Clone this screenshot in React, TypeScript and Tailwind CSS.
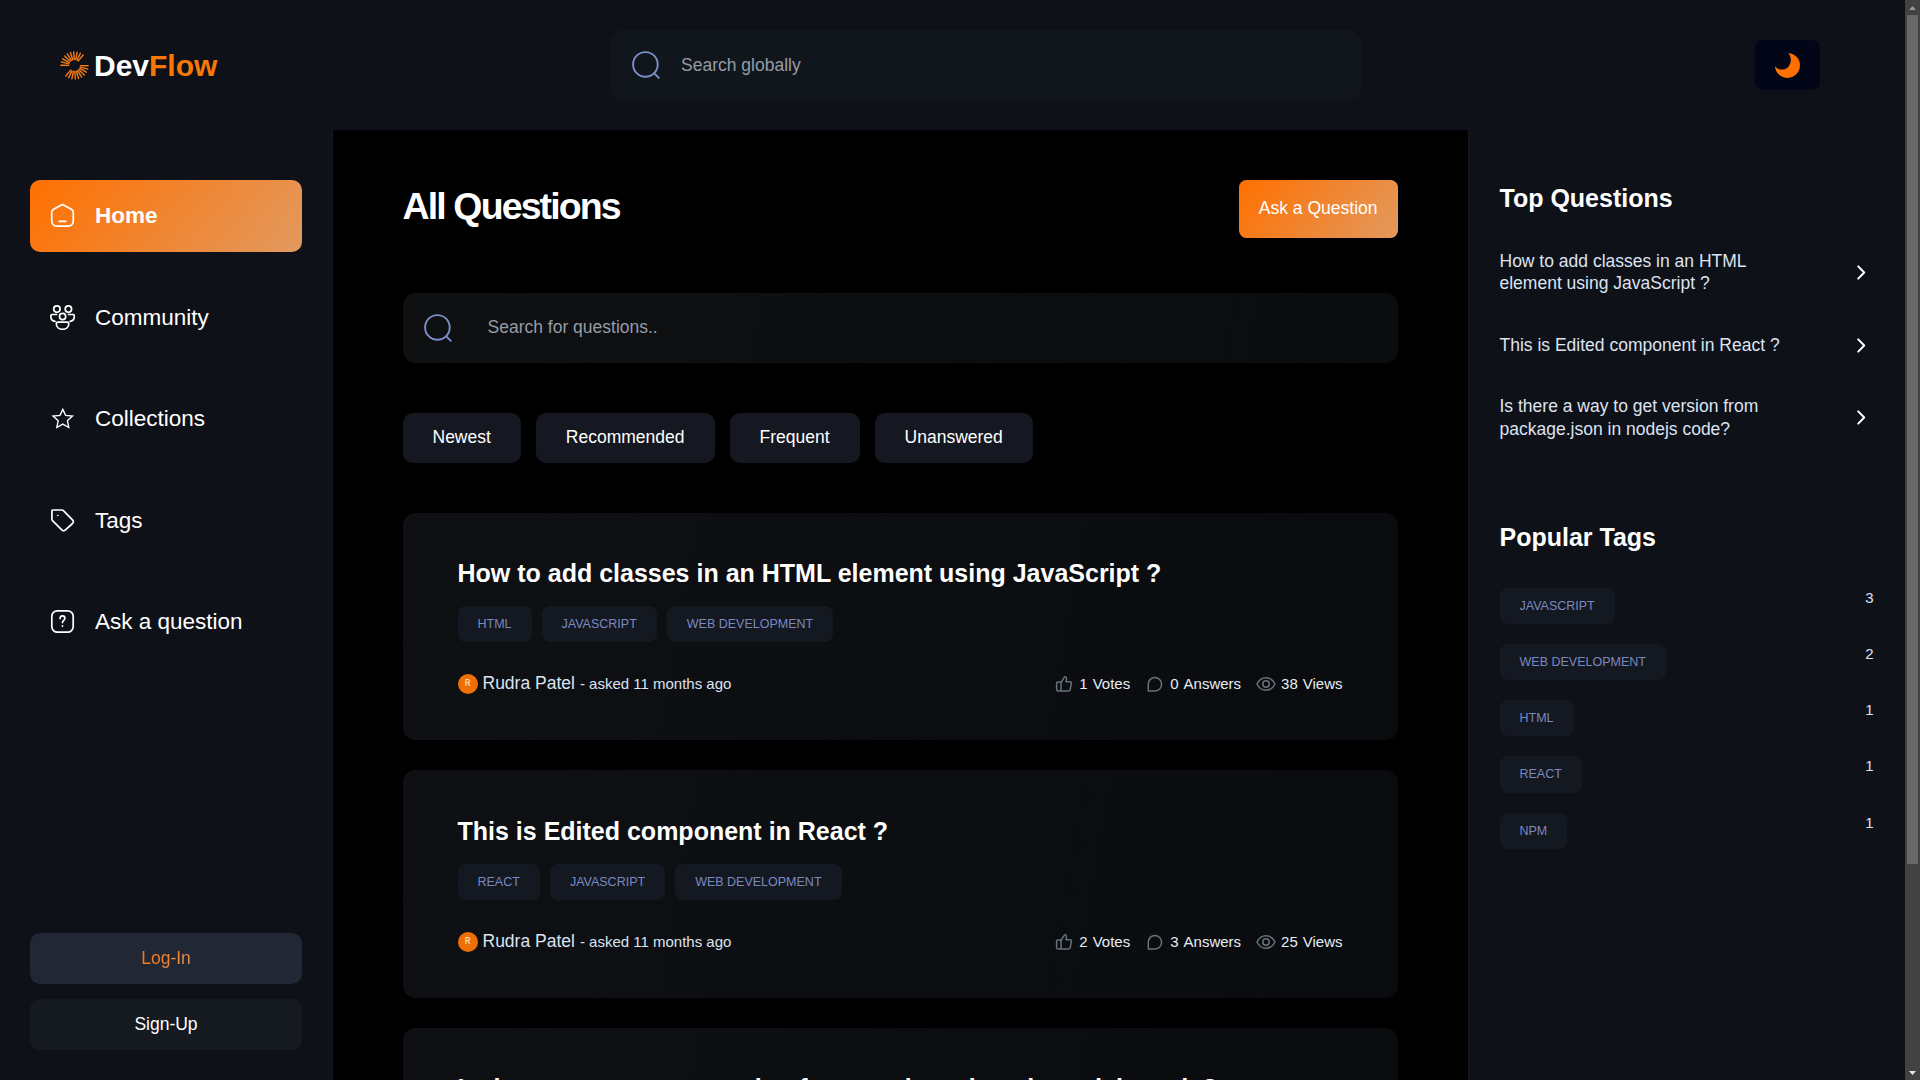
import React from "react";

const grad = "bg-[linear-gradient(129deg,#ff7000_0%,#e2995f_100%)]";

function Logo() {
  const rays = [
    ...Array.from({ length: 10 }, (_, i) => 181 + i * 14.3),
    ...Array.from({ length: 10 }, (_, i) => 1 + i * 14.3),
  ];
  return (
    <svg width="29" height="29" viewBox="-14.5 -14.5 29 29" fill="none" stroke="#f77d16" strokeWidth="1.4" strokeLinecap="round">
      {rays.map((a) => (
        <path key={a} d="M6 0H13.6" transform={`rotate(${a})`} />
      ))}
    </svg>
  );
}

function SearchIcon() {
  return (
    <svg className="shrink-0" width="30" height="30" viewBox="0 0 30 30" fill="none" stroke="#7b8ec8" strokeWidth="1.9" strokeLinecap="round">
      <circle cx="14.4" cy="14.4" r="12.3" />
      <path d="M23.6 23.6 27.8 27.8" />
    </svg>
  );
}

function NavIcon({ name }: { name: string }) {
  return (
    <svg width="25" height="25" viewBox="0 0 25 25" fill="none" stroke="white" strokeWidth="1.7" strokeLinecap="round" strokeLinejoin="round">
      {name === "home" && (
        <>
          <path d="M10.9 2.2 3.3 6.6C2.1 7.3 1.7 8.2 1.7 9.6V17.6C1.7 21.6 3.3 23.2 7.2 23.2H17.8C21.7 23.2 23.3 21.6 23.3 17.6V9.6C23.3 8.2 22.9 7.3 21.7 6.6L14.1 2.2C13 1.5 12 1.5 10.9 2.2Z" />
          <path d="M9.2 18.3H15.8" />
        </>
      )}
      {name === "community" && (
        <>
          <circle cx="6.9" cy="4.1" r="3.2" />
          <circle cx="18.4" cy="4.1" r="3.2" />
          <circle cx="12.6" cy="11.5" r="3.1" />
          <path d="M6.6 9.5H2.1C1.3 9.5.8 10 .8 10.8V11.2C.8 14 2.7 16 5 16.3" />
          <path d="M18.6 9.5H23C23.8 9.5 24.3 10 24.3 10.8V11.2C24.3 14 22.4 16 20.1 16.3" />
          <path d="M7.7 17.2H17.4C18.3 17.2 18.8 17.7 18.8 18.5 18.8 21.9 16.4 24.3 12.6 24.3S6.3 21.9 6.3 18.5C6.3 17.7 6.8 17.2 7.7 17.2Z" />
        </>
      )}
      {name === "star" && (
        <path strokeWidth="1.35" strokeLinejoin="miter" d="M12.8 3.4 15.6 9.3 22.5 10.1 17.4 14.7 18.8 21.5 12.8 18.1 6.8 21.5 8.2 14.7 3 10.1 10 9.3Z" />
      )}
      {name === "tag" && (
        <>
          <path d="M1.9 2.7V11.1C1.9 11.7 2.1 12.2 2.5 12.6L11.8 21.9C13 23.1 14.3 23.1 15.5 21.9L22.5 15.5C23.7 14.3 23.7 13 22.5 11.8L13.4 2.6C13 2.2 12.5 2 12 2H2.6C2.2 2 1.9 2.3 1.9 2.7Z" />
          <circle cx="7.6" cy="7.4" r=".3" strokeWidth="1" />
        </>
      )}
      {name === "ask" && (
        <>
          <rect x="1.8" y="1.8" width="21.4" height="21.4" rx="5.6" />
          <path d="M10.1 9.4C10.1 8 11.1 6.9 12.5 6.9S14.9 8 14.9 9.3C14.9 11.3 12.5 11.3 12.5 13.6" />
          <path d="M12.5 16.9V17.1" strokeWidth="1.8" />
        </>
      )}
    </svg>
  );
}

const nav = [
  ["home", "Home"],
  ["community", "Community"],
  ["star", "Collections"],
  ["tag", "Tags"],
  ["ask", "Ask a question"],
];

function Tag({ children }: { children: React.ReactNode }) {
  return (
    <span className="rounded-[7.5px] bg-[#141820] px-5 py-2.5 text-[12.5px] leading-[16.25px] text-[#7b88c0] uppercase">
      {children}
    </span>
  );
}

const statStyle = { fill: "none", stroke: "#66737b", strokeWidth: 1.5, strokeLinecap: "round", strokeLinejoin: "round" } as const;

function Stat({ kind, value, label }: { kind: string; value: number; label: string }) {
  return (
    <div className="flex items-center gap-[5px]">
      <svg width="20" height="20" viewBox="0 0 20 20" {...statStyle}>
        {kind === "like" && (
          <>
            <path d="M7 8.6 10.2 3.3C10.7 2.2 12.8 2.7 12.5 4.6L12 7.7H16.2C17 7.7 17.6 8.4 17.4 9.2L16.2 15.6C16 16.6 15.3 17.1 14.4 17.1H8.6C8 17.1 7.5 16.9 7 16.5Z" />
            <path d="M7 16.9H4C3.1 16.9 2.6 16.4 2.6 15.5V9.3C2.6 8.4 3.1 7.9 4 7.9H7" />
          </>
        )}
        {kind === "chat" && <path d="M3.3 16.9V10.2C3.3 6.3 6.2 3.5 9.9 3.5S16.6 6.4 16.6 10.2 13.7 16.9 9.9 16.9Z" />}
        {kind === "eye" && (
          <>
            <path d="M1 10C3 5.8 6.2 3.7 10 3.7S17 5.8 19 10C17 14.2 13.8 16.3 10 16.3S3 14.2 1 10Z" />
            <circle cx="10" cy="10" r="3.2" />
          </>
        )}
      </svg>
      <span className="text-[15px] leading-[18px] text-[#e8ecf4]">
        {value}
        <span className="ml-[5px]">{label}</span>
      </span>
    </div>
  );
}

const questions = [
  { title: "How to add classes in an HTML element using JavaScript ?", tags: ["HTML", "JavaScript", "Web Development"], stats: [1, 0, 38] },
  { title: "This is Edited component in React ?", tags: ["React", "JavaScript", "Web Development"], stats: [2, 3, 25] },
  { title: "Is there a way to get version from package.json in nodejs code?", tags: ["npm"], stats: [1, 1, 20] },
];

function QuestionCard({ q }: { q: (typeof questions)[number] }) {
  return (
    <article className="h-[227.5px] shrink-0 rounded-[12.5px] bg-[linear-gradient(100deg,#0e1013_0%,#090b0e_100%)] px-[55px] pt-[44.5px]">
      <h3 className="text-[25px] leading-[32.5px] font-semibold text-white">{q.title}</h3>
      <div className="mt-[16.5px] flex gap-2.5">
        {q.tags.map((t) => (
          <Tag key={t}>{t}</Tag>
        ))}
      </div>
      <div className="mt-[29px] flex items-center justify-between">
        <div className="flex items-center gap-[5px] text-[#dce3f1]">
          <span className="flex size-5 items-center justify-center rounded-full bg-[#ee7005] font-['Roboto'] text-[9px] font-medium text-[#ffd9b5]">R</span>
          <p className="text-[17.5px] leading-[24.5px]">
            Rudra Patel<span className="ml-[5px] text-[15px]">- asked 11 months ago</span>
          </p>
        </div>
        <div className="flex gap-[15px]">
          <Stat kind="like" value={q.stats[0]} label="Votes" />
          <Stat kind="chat" value={q.stats[1]} label="Answers" />
          <Stat kind="eye" value={q.stats[2]} label="Views" />
        </div>
      </div>
    </article>
  );
}

const topQuestions = [
  "How to add classes in an HTML element using JavaScript ?",
  "This is Edited component in React ?",
  "Is there a way to get version from package.json in nodejs code?",
];

const popular: [string, number][] = [
  ["JavaScript", 3],
  ["Web Development", 2],
  ["HTML", 1],
  ["React", 1],
  ["npm", 1],
];

export default function App() {
  return (
    <div className="flex h-[1080px] w-[1920px] overflow-hidden bg-[#0f1118] font-['Liberation_Sans',sans-serif] text-white">
      <div className="flex min-w-0 flex-1 flex-col">
        <header className="flex h-[130px] shrink-0 items-center pr-[85px] pl-[60px]">
          <div className="flex w-[551px] items-center gap-[5px]">
            <Logo />
            <p className="text-[30px] leading-[39px] font-bold">
              Dev<span className="text-[#f97706]">Flow</span>
            </p>
          </div>
          <div className="flex h-[70px] w-[750px] items-center gap-5 rounded-[12.5px] bg-[#11161c] pl-5 text-[17.5px] text-[#969ba6]">
            <SearchIcon />
            <span>Search globally</span>
          </div>
          <button className="ml-auto flex h-[50px] w-[65px] items-center justify-center rounded-[7.5px] bg-[#020617]">
            <svg width="25" height="25" viewBox="0 0 25 25" fill="#ff7000">
              <path d="M13.4 0A12.5 12.5 0 1 1 0 13.2C2.2 15.8 4.8 16.8 8 16.6 14.7 16 18.6 7 13.4 0Z" />
            </svg>
          </button>
        </header>
        <div className="flex min-h-0 flex-1">
          <aside className="flex w-[332.5px] flex-col justify-between border-r border-[#15181b] pt-[50px] pr-[29.5px] pb-[30px] pl-[30px]">
            <nav className="flex flex-col gap-[30px]">
              {nav.map(([icon, label], i) => (
                <a key={icon} className={`flex items-center gap-5 rounded-[10px] p-5 text-[22.5px] leading-[31.5px] ${i === 0 ? `${grad} font-bold` : ""}`}>
                  <NavIcon name={icon} />
                  {label}
                </a>
              ))}
            </nav>
            <div className="flex flex-col gap-[15px] text-[17.5px] leading-[21px]">
              <button className="h-[51px] rounded-[10px] bg-[#212734]">
                <span className={`${grad} bg-clip-text text-transparent`}>Log-In</span>
              </button>
              <button className="h-[51px] rounded-[10px] bg-[#151920]">Sign-Up</button>
            </div>
          </aside>
          <main className="flex min-w-0 flex-1 flex-col overflow-hidden bg-black px-[70px] pt-[50px]">
            <div className="flex h-[57.5px] shrink-0 items-center justify-between">
              <h1 className="pb-1.5 text-[37.5px] leading-[52.5px] font-bold tracking-tighter">All Questions</h1>
              <button className={`h-[57.5px] rounded-[7.5px] px-5 pb-[2px] text-[17.5px] ${grad}`}>Ask a Question</button>
            </div>
            <div className="mt-[55px] flex h-[70px] shrink-0 items-center gap-[35px] rounded-[12.5px] bg-[linear-gradient(100deg,#0e1012_0%,#0a0c0f_100%)] pl-5 text-[17.5px] text-[#969ba6]">
              <SearchIcon />
              <span>Search for questions..</span>
            </div>
            <div className="mt-[50px] flex shrink-0 gap-[15px]">
              {["Newest", "Recommended", "Frequent", "Unanswered"].map((f) => (
                <button key={f} className="h-[50px] rounded-[10px] bg-[#151821] px-[30px] text-[17.5px]">
                  {f}
                </button>
              ))}
            </div>
            <div className="mt-[50px] flex flex-col gap-[30px]">
              {questions.map((q) => (
                <QuestionCard key={q.title} q={q} />
              ))}
            </div>
          </main>
          <aside className="w-[437.5px] border-l border-[#15181b] pt-[51px] pr-[31.5px] pl-[31px]">
            <h3 className="text-[25px] leading-[35px] font-bold">Top Questions</h3>
            <div className="mt-[33.5px] flex flex-col gap-[37.5px]">
              {topQuestions.map((t) => (
                <a key={t} className="flex items-center justify-between text-[17.5px] leading-[22.75px] text-[#dce3f1]">
                  <p className="w-[310px]">{t}</p>
                  <svg width="25" height="25" viewBox="0 0 25 25" fill="none" stroke="white" strokeWidth="2" strokeLinecap="round" strokeLinejoin="round">
                    <path d="M9.2 6.4 15.2 12.5 9.2 18.6" />
                  </svg>
                </a>
              ))}
            </div>
            <h3 className="mt-[79px] text-[25px] leading-[35px] font-bold">Popular Tags</h3>
            <div className="mt-[33px] flex flex-col gap-5">
              {popular.map(([t, n]) => (
                <div key={t} className="flex h-[36.25px] items-start justify-between">
                  <Tag>{t}</Tag>
                  <span className="text-[15px] leading-[19.5px] text-[#dce3f1]">{n}</span>
                </div>
              ))}
            </div>
          </aside>
        </div>
      </div>
      <div className="flex w-[15px] flex-col items-center bg-[#424242]">
        <div className="flex h-[15px] shrink-0 items-center justify-center">
          <svg width="7" height="4" fill="#9a9a9a"><path d="M3.5 0 7 4H0Z" /></svg>
        </div>
        <div className="h-[849px] w-[11px] bg-[#686868]" />
        <div className="mt-auto flex h-[15px] items-center justify-center">
          <svg width="7" height="4" fill="#e5e5e5"><path d="M0 0H7L3.5 4Z" /></svg>
        </div>
      </div>
    </div>
  );
}
